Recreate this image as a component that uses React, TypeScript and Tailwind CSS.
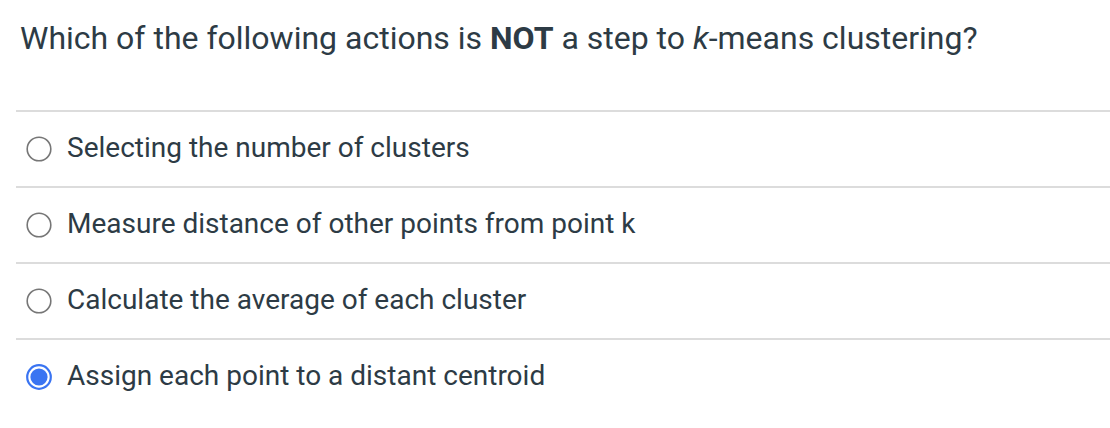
import React from 'react';

const options = [
  'Selecting the number of clusters',
  'Measure distance of other points from point k',
  'Calculate the average of each cluster',
  'Assign each point to a distant centroid',
];

const Radio = ({ checked }: { checked: boolean }) =>
  checked ? (
    <svg width="26" height="26" viewBox="0 0 26 26">
      <circle cx="13" cy="13" r="11.8" fill="white" stroke="#3a74f2" strokeWidth="2.2" />
      <circle cx="13" cy="13" r="8.6" fill="#3a74f2" />
    </svg>
  ) : (
    <svg width="26" height="26" viewBox="0 0 26 26">
      <circle cx="13" cy="13" r="11.8" fill="white" stroke="#767676" strokeWidth="1.6" />
    </svg>
  );

export default function App() {
  const selected = 3;
  return (
    <div className="w-[1110px] h-[428px] bg-white font-['Roboto',sans-serif] text-[#2d3b45] overflow-hidden">
      <div className="pl-[20px] pt-[18px] h-[110px]">
        <h1 className="text-[32px] leading-[40px]">
          Which of the following actions is <b className="font-bold">NOT</b> a step to <i>k</i>-means clustering?
        </h1>
      </div>
      <div className="ml-[16px]">
        {options.map((opt, i) => (
          <div key={i} className="border-t-2 border-[#dcdcdc] h-[76px] flex items-center pl-[10px] gap-[15px]">
            <Radio checked={i === selected} />
            <span className="text-[28px] leading-[32px] -mt-[3px]">{opt}</span>
          </div>
        ))}
      </div>
    </div>
  );
}
